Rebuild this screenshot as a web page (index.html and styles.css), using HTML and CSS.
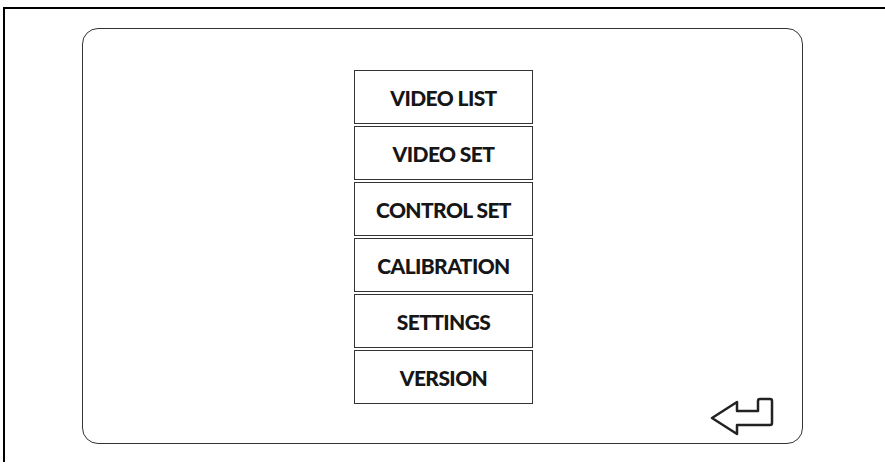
FILE: index.html
```html
<!doctype html>
<html lang="en">
<head>
	<meta charset="UTF-8">
	<title>Menu</title>
<link rel="stylesheet" href="styles.css">
</head>
<body>
	<div class="frame">
		<div class="panel">
			<ul class="menu">
				<li><a href="javascript:;">VIDEO LIST</a></li>
				<li><a href="javascript:;">VIDEO SET</a></li>
				<li><a href="javascript:;">CONTROL SET</a></li>
				<li><a href="javascript:;">CALIBRATION</a></li>
				<li><a href="javascript:;">SETTINGS</a></li>
				<li><a href="javascript:;">VERSION</a></li>
			</ul>
			<a href="javascript:;" class="back">
				<svg width="70" height="45" viewBox="0 0 70 45">
					<path d="M5 24 L30 8 L30 17 L51 17 L51 7 Q51 5 53 5 L63 5 Q65 5 65 7 L65 29 Q65 31 63 31 L30 31 L30 40 Z" fill="none" stroke="#222" stroke-width="2.5" stroke-linejoin="round"/>
				</svg>
			</a>
		</div>
	</div>
</body>
</html>
```
FILE: styles.css
```css
html,body{
	margin: 0;
	padding: 0;
	background: #fff;
}
.frame{
	margin: 7px 0 0 3px;
	border-top: 2px solid #000;
	border-left: 2px solid #000;
	height: 455px;
	box-sizing: border-box;
	padding: 19px 0 0 77px;
}
.panel{
	position: relative;
	width: 721px;
	height: 416px;
	border: 1.5px solid #333;
	border-radius: 16px;
	box-sizing: border-box;
}
.menu{
	list-style: none;
	margin: 0;
	padding: 41px 0 0 0;
	display: flex;
	flex-direction: column;
	align-items: center;
	gap: 2px;
}
.menu li{
	width: 179px;
	height: 54px;
	margin-left: 2px;
}
.menu a{
	display: flex;
	align-items: center;
	justify-content: center;
	height: 100%;
	box-sizing: border-box;
	border: 1.5px solid #333;
	text-decoration: none;
	color: #161616;
	font-family: Lato, "Noto Sans", sans-serif;
	font-weight: 900;
	font-size: 21px;
	letter-spacing: -0.6px;
	padding-top: 1px;
}
.back{
	position: absolute;
	right: 25px;
	bottom: 4px;
	display: block;
	line-height: 0;
}
```
